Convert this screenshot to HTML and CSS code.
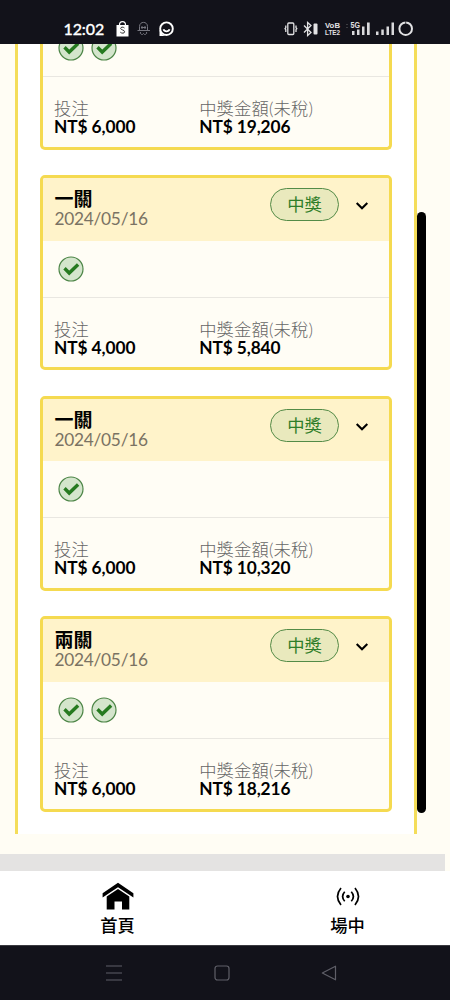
FILE: index.html
```
<!DOCTYPE html>
<html lang="zh-Hant">
<head>
<meta charset="utf-8">
<title>中獎紀錄</title>
<link rel="stylesheet" href="styles.css">
</head>
<body>
<svg width="0" height="0" class="defs">
  <symbol id="check" viewBox="0 0 26 26"><circle cx="13" cy="13" r="12" fill="#d4e5cc" stroke="#4c8546" stroke-width="1.2"/><path d="M6.500 12.300l4.700 4.700 8.900-8.500" fill="none" stroke="#267a20" stroke-width="3.400"/></symbol>
  <symbol id="chevron" viewBox="0 0 14 10"><path d="M1.700 2l5.300 5.200L12.300 2" fill="none" stroke="#000" stroke-width="2.1"/></symbol>
</svg>
<div class="screen">
  <header class="status">
    <span class="time">12:02</span>
    <svg class="status-left" width="60" height="18" viewBox="0 0 60 18">
      <path d="M2.500 5h12v11.500H2.500z" fill="#fff"/><path d="M5.500 5c0-4.500 6-4.500 6 0" fill="none" stroke="#fff" stroke-width="1.200"/><path d="M10.500 8c-1.500-1.500-4-1-3.800.6.2 1.600 3.900 1.100 3.900 3.200 0 1.700-2.900 1.800-4.300.4" fill="none" stroke="#333" stroke-width="1"/>
      <g fill="none" stroke="#777780" stroke-width="1"><path d="M25.500 10V6.500c0-5.500 8-5.500 8 0V10M23.500 10.500h12.500M26.500 12a1.600 1.600 0 1 0 3 1.500 1.600 1.600 0 1 0 3-1.500M28 6v3M31 6v3M27 7.500h5"/></g>
      <circle cx="52.500" cy="8.700" r="6.300" fill="none" stroke="#fff" stroke-width="1.900"/><path d="M45.500 9.500v6.500h6.500l-3-1z" fill="#fff"/><path d="M49.500 9.300c.8 2.800 5.200 2.800 6 0" fill="none" stroke="#fff" stroke-width="1.700"/>
    </svg>
    <svg class="status-right" width="132" height="20" viewBox="283 18 132 20">
      <g fill="none" stroke="#e2e2e4" stroke-width="1.300"><rect x="287.800" y="23" width="6" height="11.500" rx="1"/><path d="M285.800 25.500v2.200l-.8 1 .8 1v2.300M296 25.500v2.200l.8 1-.8 1v2.300"/><path d="M304 25.500l7 7-3.400 3V22.500l3.400 3-7 7"/></g>
      <rect x="313.500" y="23.500" width="4" height="11" rx="1" fill="#e2e2e4"/>
      <g class="mini"><text x="325" y="28.200" textLength="15" lengthAdjust="spacingAndGlyphs">VoB</text><text x="325" y="34.900" textLength="15" lengthAdjust="spacingAndGlyphs">LTE2</text><text class="five" x="350.500" y="28" textLength="9.500" lengthAdjust="spacingAndGlyphs">5G</text></g>
      <g fill="#d9d9dc"><path d="M352 31h2.500v4H352zM357 29.500h2.500V35H357zM362 26.500h2.500V35H362zM367 22.500h2.700V35H367z"/><path d="M376 31.500h2.500V35H376zM381.300 29.500h2.500V35h-2.500zM386.500 26.500h2.500V35h-2.500zM391.500 22.500h2.500V35h-2.500z"/><path d="M346.500 24h1v1h-1zM346.500 27h1v1h-1z" fill="#666"/></g>
      <circle cx="405.700" cy="28.700" r="6.300" fill="none" stroke="#e2e2e4" stroke-width="2"/>
      <path d="M405.700 21v3" stroke="#12121a" stroke-width=".7"/>
    </svg>
  </header>

  <main class="viewport">
    <section class="panel">
      <article class="card first">
        <div class="legs"><svg><use href="#check"/></svg><svg><use href="#check"/></svg></div>
        <dl class="amounts"><div><dt>投注</dt><dd>NT$ 6,000</dd></div><div><dt>中獎金額(未稅)</dt><dd>NT$ 19,206</dd></div></dl>
      </article>
      <article class="card">
        <div class="head"><div class="info"><h2>一關</h2><time>2024/05/16</time></div><span class="badge">中獎</span><svg class="chevron"><use href="#chevron"/></svg></div>
        <div class="legs"><svg><use href="#check"/></svg></div>
        <dl class="amounts"><div><dt>投注</dt><dd>NT$ 4,000</dd></div><div><dt>中獎金額(未稅)</dt><dd>NT$ 5,840</dd></div></dl>
      </article>
      <article class="card">
        <div class="head"><div class="info"><h2>一關</h2><time>2024/05/16</time></div><span class="badge">中獎</span><svg class="chevron"><use href="#chevron"/></svg></div>
        <div class="legs"><svg><use href="#check"/></svg></div>
        <dl class="amounts"><div><dt>投注</dt><dd>NT$ 6,000</dd></div><div><dt>中獎金額(未稅)</dt><dd>NT$ 10,320</dd></div></dl>
      </article>
      <article class="card">
        <div class="head"><div class="info"><h2>兩關</h2><time>2024/05/16</time></div><span class="badge">中獎</span><svg class="chevron"><use href="#chevron"/></svg></div>
        <div class="legs"><svg><use href="#check"/></svg><svg><use href="#check"/></svg></div>
        <dl class="amounts"><div><dt>投注</dt><dd>NT$ 6,000</dd></div><div><dt>中獎金額(未稅)</dt><dd>NT$ 18,216</dd></div></dl>
      </article>
    </section>
    <div class="footer-strip"></div>
    <div class="scrollbar"></div>
  </main>

  <nav class="tabs">
    <a class="tab"><svg width="32" height="28" viewBox="0 0 32 28"><path d="M.6 11.300L16 .8l15.400 10.500v4.200L16 5.200.6 15.500z"/><path d="M4.700 14.500L16 7l11.300 7.500V27.500H20v-8h-7.500v8H4.700z"/></svg><span>首頁</span></a>
    <a class="tab"><svg width="24" height="28" viewBox="0 0 24 28"><circle cx="12" cy="14.500" r="1.800"/><path d="M5 6Q-2 14.500 5 23M19 6q7 8.500 0 17M8.700 9.800q-4.200 4.700 0 9.400M15.300 9.800q4.200 4.700 0 9.400" fill="none" stroke="#000" stroke-width="1.700"/></svg><span>場中</span></a>
  </nav>

  <footer class="system">
    <svg width="16" height="16" viewBox="0 0 16 16"><path d="M0 1h16M0 8h16M0 15h16"/></svg>
    <svg width="16" height="16" viewBox="0 0 16 16"><rect x="1" y="1" width="14" height="14" rx="2.500"/></svg>
    <svg width="16" height="16" viewBox="0 0 16 16"><path d="M14.500 1.200v13.600L1.300 8z" stroke-linejoin="round"/></svg>
  </footer>
</div>
</body>
</html>
```
FILE: styles.css
```
* { box-sizing: border-box; }
body, h2, dl, dd { margin: 0; }
body { font-family: Lato, "Noto Sans CJK TC", sans-serif; font-size: 17.3px; color: #000; }
svg { display: block; }
.defs { position: absolute; }
.screen { width: 450px; height: 1000px; display: flex; flex-direction: column; overflow: hidden; background: #fffdf4; }

.status { height: 44px; flex: none; background: #12121a; display: flex; align-items: flex-start; padding: 18px 35px 0 63.500px; position: relative; z-index: 1; }
.time { color: #fff; font-size: 16px; font-weight: 500; line-height: 22px; width: 50.500px; font-family: Lato, sans-serif; -webkit-text-stroke: .3px #fff; letter-spacing: -.1px; }
.status-left { margin-top: 2px; }
.status-right { margin-left: auto; }
.mini text { font: bold 8px "Liberation Sans", sans-serif; fill: #e2e2e4; }
.mini .five { font-size: 8.5px; }

.viewport { position: relative; height: 827px; flex: none; overflow: hidden; display: flex; flex-direction: column; background: #fffdf4; }
.panel { margin-left: 15px; width: 402px; height: 790px; flex: none; padding: 0 23px; background: #fff; border: solid #f4dd5a; border-width: 0 3px; display: flex; flex-direction: column; gap: 25.5px; }
.card { height: 195.200px; flex: none; width: 352px; margin-left: -1px; border: 3px solid #f5da50; border-radius: 5px; background: #fffdf5; overflow: hidden; }
.first { height: 105.500px; border-top: 0; border-radius: 0 0 5px 5px; }
.head { height: 62.500px; background: #fff3ca; display: flex; align-items: flex-start; padding: 10px 20px 0 11.500px; }
.info { flex: 1; }
h2 { font-size: 19px; line-height: 21px; font-weight: 700; }
time { display: block; line-height: 20px; color: #7a7263; letter-spacing: -.26px; }
.badge { width: 69px; height: 33px; border: 1.500px solid #548b47; border-radius: 17px; background: #e9e9bd; color: #2f7e2a; text-align: center; line-height: 31.500px; }
.chevron { width: 14px; height: 10px; margin: 13px 0 0 16px; }
.legs { height: 57px; border-bottom: 1.500px solid #e9e7e1; display: flex; align-items: center; gap: 7px; padding-left: 14.800px; }
.legs svg { width: 26px; height: 26px; }
.first .legs { height: 33px; align-items: flex-end; padding-bottom: 15px; }
.amounts { display: grid; grid-template-columns: 145.200px 1fr; padding: 22px 0 0 11px; }
dt { line-height: 19px; color: #666; font-weight: 300; white-space: nowrap; letter-spacing: .15px; }
dd { line-height: 18px; font-weight: 700; white-space: nowrap; letter-spacing: -.08px; }
.footer-strip { width: 445px; height: 17px; margin-top: 20px; background: #e4e3e2; flex: none; }
.scrollbar { position: absolute; left: 416.500px; top: 168px; width: 9px; height: 600.500px; border-radius: 5px; background: #000; }

.tabs { height: 74px; flex: none; background: #fff; display: grid; grid-template-columns: 230px 230px; padding: 11px 0 0 2.500px; }
.tab { display: flex; flex-direction: column; align-items: center; }
.tab span { line-height: 22px; margin-top: 5px; font-weight: 500; }

.system { flex: 1; background: #12121a; border-top: 1px solid #3a3a40; display: flex; gap: 91.500px; padding: 18.500px 0 0 106px; }
.system svg { fill: none; stroke: #5f5f68; stroke-width: 1.200; }
```
